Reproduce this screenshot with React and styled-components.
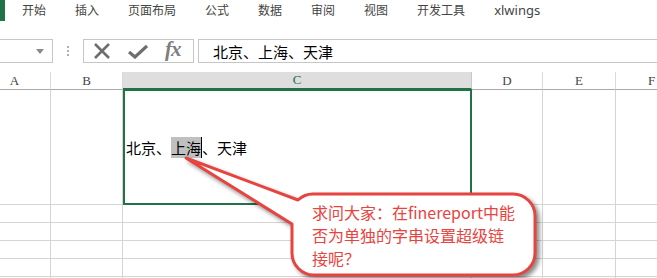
import React from "react"
import styled, { createGlobalStyle } from "styled-components"

const Global = createGlobalStyle`
  html, body { margin: 0; padding: 0; background: #fff; overflow: hidden; }
  body { font-family: "Noto Sans CJK SC", "Noto Sans", sans-serif; }
`

const Page = styled.div`
  position: relative;
  width: 657px;
  height: 278px;
  overflow: hidden;
`

const Ribbon = styled.div`
  display: flex;
  align-items: center;
  height: 21px;
  gap: 29px;
  font-size: 12px;
  color: #444;
  .mark {
    width: 5px;
    height: 21px;
    background: #217346;
    margin-right: -12px;
  }
  span { line-height: 18px; margin-top: -2px; }
  .latin { font-family: "Noto Sans", sans-serif; font-size: 13px; }
`

const FormulaBar = styled.div`
  display: flex;
  align-items: stretch;
  height: 24px;
  margin-top: 18px;
  .namebox {
    width: 74px;
    margin-left: -21px;
    border: 1px solid #c6c6c6;
    box-sizing: border-box;
    display: flex;
    align-items: center;
    justify-content: flex-end;
    padding-right: 8px;
  }
  .dots {
    width: 30px;
    display: flex;
    flex-direction: column;
    align-items: center;
    justify-content: center;
    gap: 2px;
    i { width: 2px; height: 2px; background: #b0b0b0; display: block; }
  }
  .icons {
    width: 111px;
    border: 1px solid #c6c6c6;
    box-sizing: border-box;
    display: flex;
    align-items: center;
    padding-left: 9px;
    gap: 17px;
  }
  .fx {
    font-family: "Liberation Serif", serif;
    font-style: italic;
    font-weight: bold;
    font-size: 21px;
    color: #7e7e7e;
    letter-spacing: -1px;
    margin-top: -3px;
  }
  .input {
    flex: 1;
    margin-left: 4px;
    border: 1px solid #c6c6c6;
    border-right: none;
    box-sizing: border-box;
    display: flex;
    align-items: center;
    padding-left: 14px;
    font-size: 15px;
    color: #000;
  }
`

const Grid = styled.div`
  display: grid;
  grid-template-columns: 72px 72px 349px 71px 73px 72px;
  grid-template-rows: 18px 115px repeat(5, 18px);
  margin-top: 9px;
  margin-left: -21px;
`

const Head = styled.div`
  box-sizing: border-box;
  border-right: 1px solid #dadada;
  border-bottom: 1px solid #ababab;
  background: ${p => (p.$active ? "#dedede" : "#fff")};
  ${p => p.$active && "border-bottom: 2px solid #217346; border-right-color: #c8c8c8;"}
  color: ${p => (p.$active ? "#217346" : "#444")};
  font-family: "Liberation Serif", serif;
  font-size: 13px;
  display: flex;
  align-items: flex-end;
  justify-content: center;
  line-height: 16px;
`

const Cell = styled.div`
  position: relative;
  box-sizing: border-box;
  border-right: 1px solid #d4d4d4;
  border-bottom: 1px solid #d4d4d4;
  ${p => p.$selected && `
    display: flex;
    align-items: center;
    padding-left: 3px;
    font-size: 15px;
    color: #000;
    &::after {
      content: "";
      position: absolute;
      left: 0;
      top: -1px;
      right: -1px;
      bottom: -1px;
      border: 2px solid #217346;
    }
  `}
  .hl {
    background: #c0c0c0;
    border-right: 1px solid #000;
  }
`

const CalloutText = styled.div`
  position: absolute;
  left: 312px;
  top: 201px;
  font-size: 16px;
  line-height: 23px;
  color: #e8433e;
  white-space: nowrap;
`

const Callout = () => (
  <>
    <svg
      width="657"
      height="278"
      style={{ position: "absolute", left: 0, top: 0, pointerEvents: "none", filter: "drop-shadow(3px 3px 2px rgba(0,0,0,0.45))" }}
    >
      <path
        d="M186 158 L298 200 A22 22 0 0 1 314 194 L513 194 A22 22 0 0 1 535 216 L535 253 A22 22 0 0 1 513 275 L314 275 A22 22 0 0 1 292 253 L292 224 Z"
        fill="#fff"
        stroke="#e8443f"
        strokeWidth="3"
        strokeLinejoin="round"
      />
    </svg>
    <CalloutText>
      求问大家：在finereport中能<br />
      否为单独的字串设置超级链<br />
      接呢？
    </CalloutText>
  </>
)

const tabs = ["开始", "插入", "页面布局", "公式", "数据", "审阅", "视图", "开发工具"]
const cols = ["A", "B", "C", "D", "E", "F"]

export default function App() {
  return (
    <Page>
      <Global />
      <Ribbon>
        <div className="mark" />
        {tabs.map(t => <span key={t}>{t}</span>)}
        <span className="latin">xlwings</span>
      </Ribbon>
      <FormulaBar>
        <div className="namebox">
          <svg width="8" height="5"><path d="M0 0 L8 0 L4 5 Z" fill="#8a8a8a" /></svg>
        </div>
        <div className="dots"><i /><i /><i /></div>
        <div className="icons">
          <svg width="18" height="16" viewBox="0 0 18 16">
            <path d="M2 1 L16 15 M16 1 L2 15" stroke="#6e6e6e" strokeWidth="2.6" />
          </svg>
          <svg width="20" height="15" viewBox="0 0 20 15">
            <path d="M1 8 L7 13 L19 2" stroke="#6e6e6e" strokeWidth="3.2" fill="none" />
          </svg>
          <span className="fx">fx</span>
        </div>
        <div className="input">北京、上海、天津</div>
      </FormulaBar>
      <Grid>
        {cols.map(c => <Head key={c} $active={c === "C"}>{c}</Head>)}
        {cols.map(c =>
          c === "C" ? (
            <Cell key={c} $selected>
              北京、<span className="hl">上海</span>、天津
            </Cell>
          ) : (
            <Cell key={c} />
          )
        )}
        {Array.from({ length: 5 * 6 }).map((_, i) => <Cell key={"r" + i} />)}
      </Grid>
      <Callout />
    </Page>
  )
}
